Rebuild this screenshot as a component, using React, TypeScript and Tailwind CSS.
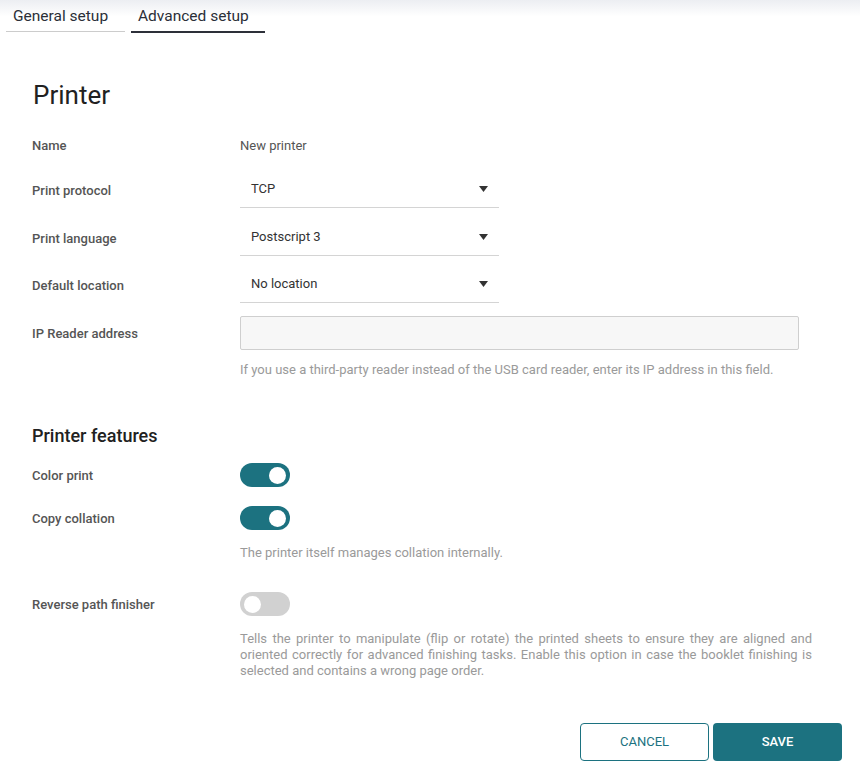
import { useState } from "react";

const TEAL = "bg-[#1c7280]";

function Caret() {
  return (
    <svg width="9" height="6" viewBox="0 0 9 6" className="shrink-0">
      <path d="M0 0h9L4.5 6z" fill="#333" />
    </svg>
  );
}

function SelectRow({ label, value, className }: { label: string; value: string; className: string }) {
  return (
    <div className={`flex items-center ${className}`}>
      <div className="w-[208px] pt-[2px] text-[13px] font-medium text-[#555]">{label}</div>
      <div className="flex h-[37px] w-[259px] items-center justify-between border-b border-[#d4d4d4] pl-[11px] pr-[11px] text-[13px] text-[#333]">
        <span>{value}</span>
        <Caret />
      </div>
    </div>
  );
}

function Toggle({ on, onClick }: { on: boolean; onClick: () => void }) {
  return (
    <button
      onClick={onClick}
      className={`flex h-[24px] w-[50px] items-center rounded-full px-[4px] ${on ? `${TEAL} justify-end` : "bg-[#d1d1d1] justify-start"}`}
    >
      <span className="h-[17px] w-[17px] rounded-full bg-white" />
    </button>
  );
}

function ToggleRow({ label, on, onClick, className }: { label: string; on: boolean; onClick: () => void; className: string }) {
  return (
    <div className={`flex items-center ${className}`}>
      <div className="w-[208px] pt-[2px] text-[13px] font-medium text-[#555]">{label}</div>
      <Toggle on={on} onClick={onClick} />
    </div>
  );
}

export default function App() {
  const [color, setColor] = useState(true);
  const [collate, setCollate] = useState(true);
  const [reverse, setReverse] = useState(false);

  return (
    <div className="min-h-screen w-[860px] bg-white font-['Roboto',sans-serif]">
      <div className="flex items-start gap-[6px] bg-gradient-to-b from-[#eceef2] via-white to-white px-[6px]">
        <div className="h-[32px] w-[119px] border-b border-[#cccccc] pl-[7px] pt-[6px] text-[15.5px] leading-[20px] text-[#2b2f38]">
          General setup
        </div>
        <div className="h-[33px] w-[134px] border-b-2 border-[#2d3039] pl-[7px] pt-[6px] text-[15.5px] leading-[20px] text-[#2b2f38]">
          Advanced setup
        </div>
      </div>

      <div className="flex flex-col pl-[32px]">
        <h1 className="mt-[46px] h-[32px] pl-[1px] text-[26px] leading-[32px] font-normal text-[#212121]">Printer</h1>

        <div className="mt-[24px] flex h-[20px] items-center">
          <div className="w-[208px] pt-[2px] text-[13px] font-medium text-[#555]">Name</div>
          <div className="pt-[2px] text-[13px] text-[#555]">New printer</div>
        </div>

        <SelectRow label="Print protocol" value="TCP" className="mt-[16px]" />
        <SelectRow label="Print language" value="Postscript 3" className="mt-[11px]" />
        <SelectRow label="Default location" value="No location" className="mt-[10px]" />

        <div className="mt-[13px] flex items-center">
          <div className="w-[208px] pt-[2px] text-[13px] font-medium text-[#555]">IP Reader address</div>
          <input className="h-[34px] w-[559px] rounded-[2px] border border-[#cfcfcf] bg-[#f7f7f7] px-[10px] text-[13px] outline-none" />
        </div>
        <p className="mt-[12px] ml-[208px] text-[13px] leading-[16px] text-[#9a9a9a]">
          If you use a third-party reader instead of the USB card reader, enter its IP address in this field.
        </p>

        <h2 className="mt-[46px] h-[24px] text-[18px] leading-[24px] font-medium text-[#212121]">Printer features</h2>

        <ToggleRow label="Color print" on={color} onClick={() => setColor(!color)} className="mt-[15px]" />
        <ToggleRow label="Copy collation" on={collate} onClick={() => setCollate(!collate)} className="mt-[19px]" />
        <p className="mt-[15px] ml-[208px] text-[13px] leading-[16px] text-[#9a9a9a]">
          The printer itself manages collation internally.
        </p>

        <ToggleRow label="Reverse path finisher" on={reverse} onClick={() => setReverse(!reverse)} className="mt-[31px]" />
        <p className="mt-[15px] ml-[208px] w-[572px] text-justify text-[13px] leading-[16px] text-[#9a9a9a]">
          Tells the printer to manipulate (flip or rotate) the printed sheets to ensure they are aligned and oriented correctly for advanced finishing tasks. Enable this option in case the booklet finishing is selected and contains a wrong page order.
        </p>

        <div className="mt-[44px] flex justify-end gap-[4px] pr-[18px]">
          <button className="h-[38px] w-[129px] rounded-[4px] border border-[#1c7280] bg-white text-[13px] text-[#1c7280]">
            CANCEL
          </button>
          <button className={`h-[38px] w-[129px] rounded-[4px] ${TEAL} text-[13px] font-medium text-white`}>
            SAVE
          </button>
        </div>
      </div>
    </div>
  );
}
